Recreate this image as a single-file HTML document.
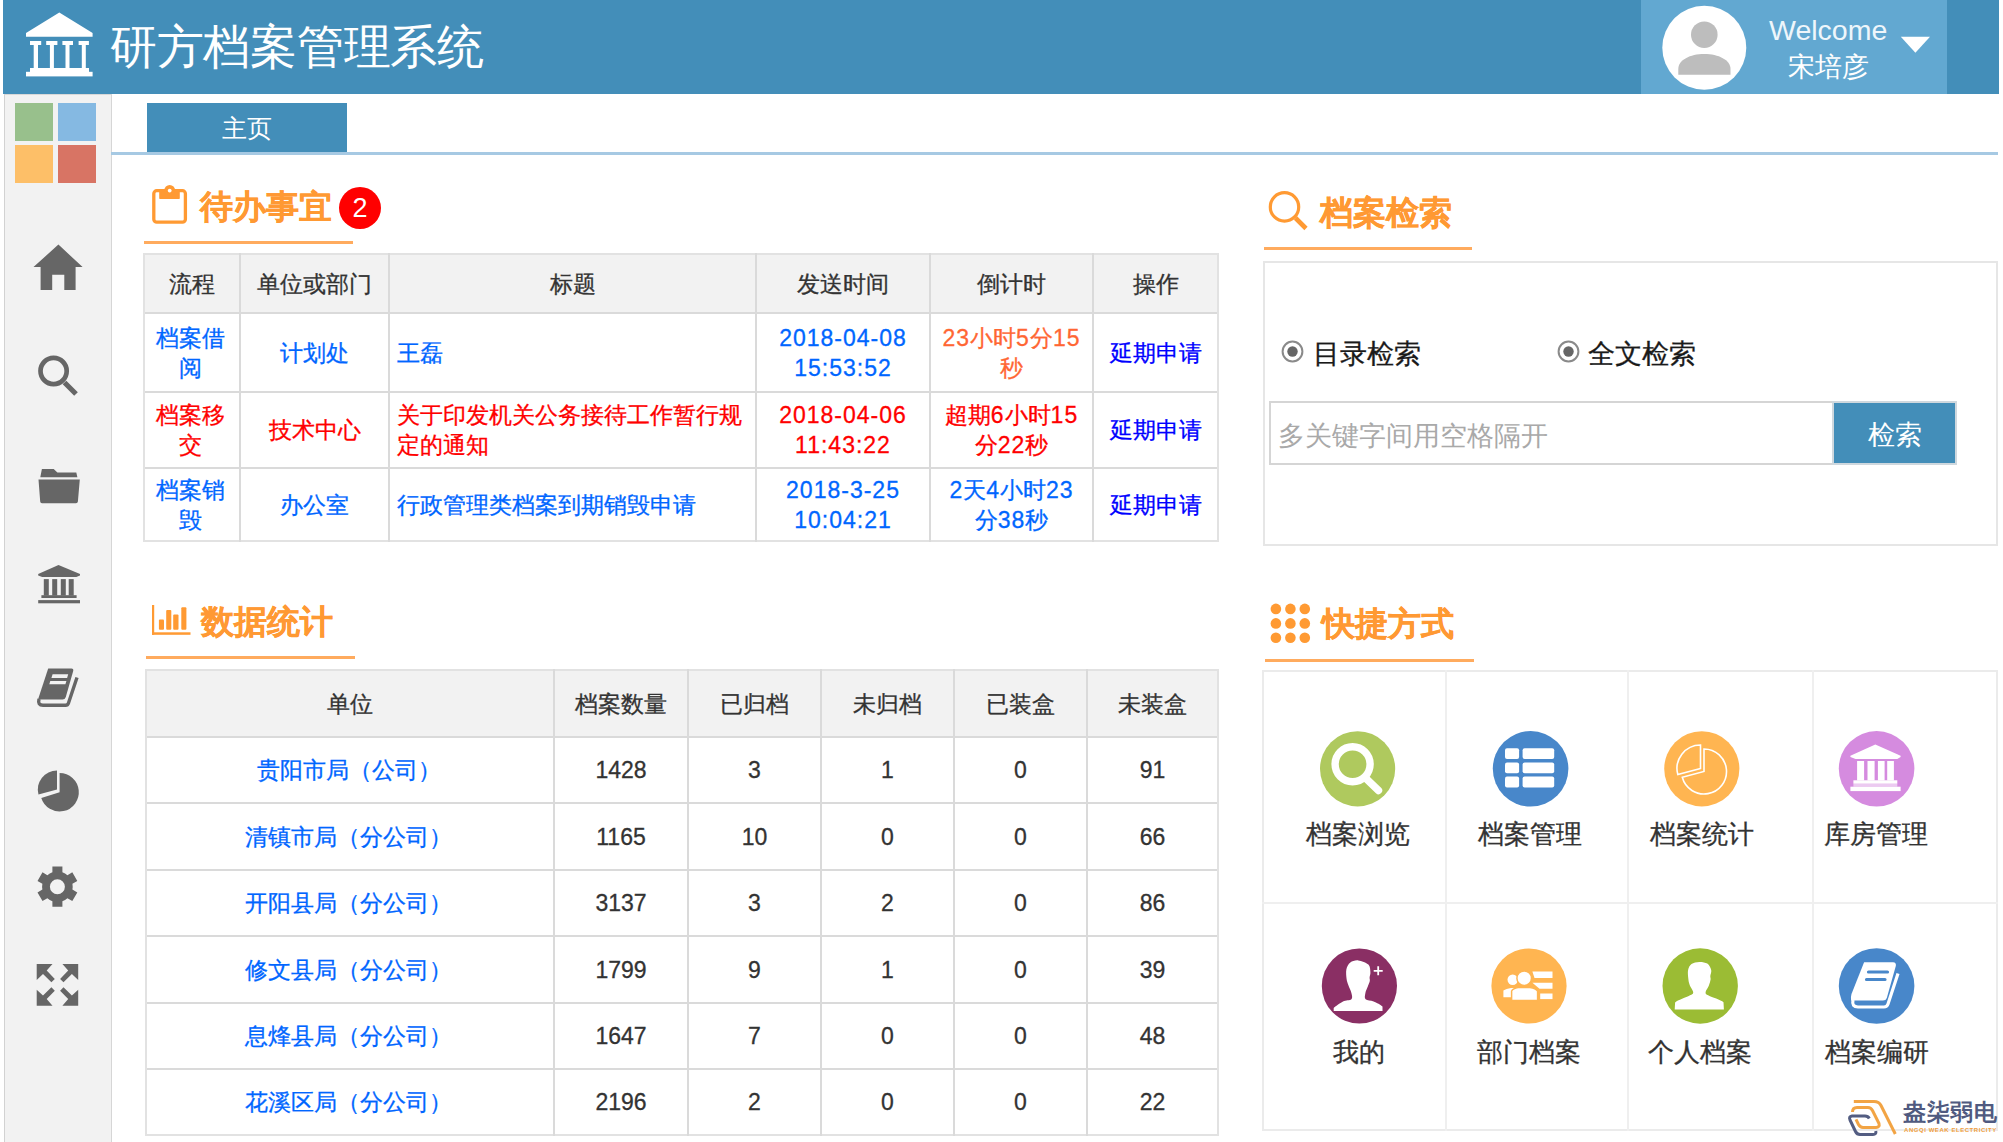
<!DOCTYPE html><html><head><meta charset="utf-8"><style>
*{margin:0;padding:0;box-sizing:border-box}
html,body{width:2003px;height:1142px;overflow:hidden;background:#fff}
body{font-family:"Liberation Sans",sans-serif;position:relative;color:#333}
.a{position:absolute;white-space:nowrap}
.c{position:absolute;display:flex;align-items:center;justify-content:center;text-align:center}
.t{font-size:23px;line-height:30px;-webkit-text-stroke:0.3px currentColor}
.bl{color:#0066ff}
.rd{color:#ff0000}
.or{color:#ff6633}
.lk{color:#0000ff}
.tt{color:#ff9933;font-weight:bold;font-size:33px;line-height:40px;-webkit-text-stroke:0.35px #ff9933}
.n{letter-spacing:1px}
.ic{font-size:26px;line-height:30px;color:#333;-webkit-text-stroke:0.3px currentColor}
</style></head><body>
<div class="a" style="left:3px;top:0;width:1995.6px;height:94px;background:#438eb9"></div>
<div class="a" style="left:1641px;top:0;width:306px;height:94px;background:#62a8d1"></div>
<div class="a" style="left:4px;top:94px;width:108px;height:1048px;background:#f2f2f2;border-left:1px solid #d2d2d2;border-right:1px solid #d6d6d6;border-top:1px solid #d8d8d8"></div>
<div class="c" style="left:147px;top:103px;width:200px;height:50px;background:#438eb9;color:#fff;font-size:25px;font-weight:300">主页</div>
<div class="a" style="left:111px;top:152px;width:1887px;height:3px;background:#a6c9e3"></div>
<div class="a" style="left:110px;top:17px;font-size:46.5px;letter-spacing:-0.3px;line-height:60px;color:#fff;font-weight:400">研方档案管理系统</div>
<div class="a" style="left:1769px;top:12px;font-size:28.5px;line-height:36px;color:#eef6fb">Welcome</div>
<div class="a" style="left:1788px;top:49.5px;font-size:27px;line-height:34px;color:#fff;font-weight:300">宋培彦</div>
<div class="a tt" style="left:200px;top:186.5px">待办事宜</div>
<div class="c" style="left:339px;top:187px;width:42px;height:42px;border-radius:50%;background:#ff0000;color:#fff;font-size:27px">2</div>
<div class="a" style="left:144px;top:241px;width:209px;height:3px;background:#ffab5e"></div>
<div class="a tt" style="left:201px;top:602px">数据统计</div>
<div class="a" style="left:146px;top:656px;width:209px;height:3px;background:#ffab5e"></div>
<div class="a tt" style="left:1319.5px;top:193px">档案检索</div>
<div class="a" style="left:1264px;top:247px;width:208px;height:3px;background:#ffab5e"></div>
<div class="a tt" style="left:1321.5px;top:604px">快捷方式</div>
<div class="a" style="left:1265px;top:659px;width:209px;height:3px;background:#ffab5e"></div>
<div class="a" style="left:144px;top:254px;width:1074px;height:59px;background:#f2f2f2"></div>
<div class="a" style="left:143px;top:253px;width:1076px;height:2px;background:#e2e2e2"></div>
<div class="a" style="left:143px;top:312px;width:1076px;height:2px;background:#dadada"></div>
<div class="a" style="left:143px;top:391px;width:1076px;height:2px;background:#dadada"></div>
<div class="a" style="left:143px;top:467px;width:1076px;height:2px;background:#dadada"></div>
<div class="a" style="left:143px;top:540px;width:1076px;height:2px;background:#e2e2e2"></div>
<div class="a" style="left:143px;top:253px;width:2px;height:289px;background:#e2e2e2"></div>
<div class="a" style="left:239px;top:253px;width:2px;height:289px;background:#dadada"></div>
<div class="a" style="left:388px;top:253px;width:2px;height:289px;background:#dadada"></div>
<div class="a" style="left:755px;top:253px;width:2px;height:289px;background:#dadada"></div>
<div class="a" style="left:929px;top:253px;width:2px;height:289px;background:#dadada"></div>
<div class="a" style="left:1092px;top:253px;width:2px;height:289px;background:#dadada"></div>
<div class="a" style="left:1217px;top:253px;width:2px;height:289px;background:#e2e2e2"></div>
<div class="c t" style="left:144px;top:254px;width:96px;height:59px;justify-content:center;padding-left:0px;"><div>流程</div></div>
<div class="c t" style="left:240px;top:254px;width:149px;height:59px;justify-content:center;padding-left:0px;"><div>单位或部门</div></div>
<div class="c t" style="left:389px;top:254px;width:367px;height:59px;justify-content:center;padding-left:0px;"><div>标题</div></div>
<div class="c t" style="left:756px;top:254px;width:174px;height:59px;justify-content:center;padding-left:0px;"><div>发送时间</div></div>
<div class="c t" style="left:930px;top:254px;width:163px;height:59px;justify-content:center;padding-left:0px;"><div>倒计时</div></div>
<div class="c t" style="left:1093px;top:254px;width:125px;height:59px;justify-content:center;padding-left:0px;"><div>操作</div></div>
<div class="c t bl" style="left:144px;top:313px;width:96px;height:79px;justify-content:center;padding-left:0px;padding-right:3px"><div>档案借<br>阅</div></div>
<div class="c t bl" style="left:240px;top:313px;width:149px;height:79px;justify-content:center;padding-left:0px;"><div>计划处</div></div>
<div class="c t bl" style="left:389px;top:313px;width:367px;height:79px;justify-content:flex-start;padding-left:8px;text-align:left"><div>王磊</div></div>
<div class="c t bl" style="left:756px;top:313px;width:174px;height:79px;justify-content:center;padding-left:0px;"><div><span class="n">2018-04-08</span><br><span class="n">15:53:52</span></div></div>
<div class="c t bl" style="left:930px;top:313px;width:163px;height:79px;justify-content:center;padding-left:0px;"><div><span class="or"><span class="n">23</span>小时<span class="n">5</span>分<span class="n">15</span><br>秒</span></div></div>
<div class="c t lk" style="left:1093px;top:313px;width:125px;height:79px;justify-content:center;padding-left:0px;"><div>延期申请</div></div>
<div class="c t rd" style="left:144px;top:392px;width:96px;height:76px;justify-content:center;padding-left:0px;padding-right:3px"><div>档案移<br>交</div></div>
<div class="c t rd" style="left:240px;top:392px;width:149px;height:76px;justify-content:center;padding-left:0px;"><div>技术中心</div></div>
<div class="c t rd" style="left:389px;top:392px;width:367px;height:76px;justify-content:flex-start;padding-left:8px;text-align:left"><div>关于印发机关公务接待工作暂行规<br>定的通知</div></div>
<div class="c t rd" style="left:756px;top:392px;width:174px;height:76px;justify-content:center;padding-left:0px;"><div><span class="n">2018-04-06</span><br><span class="n">11:43:22</span></div></div>
<div class="c t rd" style="left:930px;top:392px;width:163px;height:76px;justify-content:center;padding-left:0px;"><div>超期<span class="n">6</span>小时<span class="n">15</span><br>分<span class="n">22</span>秒</div></div>
<div class="c t lk" style="left:1093px;top:392px;width:125px;height:76px;justify-content:center;padding-left:0px;"><div>延期申请</div></div>
<div class="c t bl" style="left:144px;top:468px;width:96px;height:73px;justify-content:center;padding-left:0px;padding-right:3px"><div>档案销<br>毁</div></div>
<div class="c t bl" style="left:240px;top:468px;width:149px;height:73px;justify-content:center;padding-left:0px;"><div>办公室</div></div>
<div class="c t bl" style="left:389px;top:468px;width:367px;height:73px;justify-content:flex-start;padding-left:8px;text-align:left"><div>行政管理类档案到期销毁申请</div></div>
<div class="c t bl" style="left:756px;top:468px;width:174px;height:73px;justify-content:center;padding-left:0px;"><div><span class="n">2018-3-25</span><br><span class="n">10:04:21</span></div></div>
<div class="c t bl" style="left:930px;top:468px;width:163px;height:73px;justify-content:center;padding-left:0px;"><div><span class="n">2</span>天<span class="n">4</span>小时<span class="n">23</span><br>分<span class="n">38</span>秒</div></div>
<div class="c t lk" style="left:1093px;top:468px;width:125px;height:73px;justify-content:center;padding-left:0px;"><div>延期申请</div></div>
<div class="a" style="left:146px;top:670px;width:1072px;height:67px;background:#f2f2f2"></div>
<div class="a" style="left:145px;top:669px;width:1074px;height:2px;background:#e2e2e2"></div>
<div class="a" style="left:145px;top:736px;width:1074px;height:2px;background:#dadada"></div>
<div class="a" style="left:145px;top:802px;width:1074px;height:2px;background:#dadada"></div>
<div class="a" style="left:145px;top:869px;width:1074px;height:2px;background:#dadada"></div>
<div class="a" style="left:145px;top:935px;width:1074px;height:2px;background:#dadada"></div>
<div class="a" style="left:145px;top:1002px;width:1074px;height:2px;background:#dadada"></div>
<div class="a" style="left:145px;top:1068px;width:1074px;height:2px;background:#dadada"></div>
<div class="a" style="left:145px;top:1134px;width:1074px;height:2px;background:#e2e2e2"></div>
<div class="a" style="left:145px;top:669px;width:2px;height:467px;background:#e2e2e2"></div>
<div class="a" style="left:553px;top:669px;width:2px;height:467px;background:#dadada"></div>
<div class="a" style="left:687px;top:669px;width:2px;height:467px;background:#dadada"></div>
<div class="a" style="left:820px;top:669px;width:2px;height:467px;background:#dadada"></div>
<div class="a" style="left:953px;top:669px;width:2px;height:467px;background:#dadada"></div>
<div class="a" style="left:1086px;top:669px;width:2px;height:467px;background:#dadada"></div>
<div class="a" style="left:1217px;top:669px;width:2px;height:467px;background:#e2e2e2"></div>
<div class="c t" style="left:146px;top:670px;width:408px;height:67px;justify-content:center;padding-left:0px;"><div>单位</div></div>
<div class="c t" style="left:554px;top:670px;width:134px;height:67px;justify-content:center;padding-left:0px;"><div>档案数量</div></div>
<div class="c t" style="left:688px;top:670px;width:133px;height:67px;justify-content:center;padding-left:0px;"><div>已归档</div></div>
<div class="c t" style="left:821px;top:670px;width:133px;height:67px;justify-content:center;padding-left:0px;"><div>未归档</div></div>
<div class="c t" style="left:954px;top:670px;width:133px;height:67px;justify-content:center;padding-left:0px;"><div>已装盒</div></div>
<div class="c t" style="left:1087px;top:670px;width:131px;height:67px;justify-content:center;padding-left:0px;"><div>未装盒</div></div>
<div class="c t bl" style="left:146px;top:737px;width:408px;height:66px;justify-content:center;padding-left:0px;padding-right:3px"><div>贵阳市局（公司）</div></div>
<div class="c t" style="left:554px;top:737px;width:134px;height:66px;justify-content:center;padding-left:0px;color:#333"><div>1428</div></div>
<div class="c t" style="left:688px;top:737px;width:133px;height:66px;justify-content:center;padding-left:0px;color:#333"><div>3</div></div>
<div class="c t" style="left:821px;top:737px;width:133px;height:66px;justify-content:center;padding-left:0px;color:#333"><div>1</div></div>
<div class="c t" style="left:954px;top:737px;width:133px;height:66px;justify-content:center;padding-left:0px;color:#333"><div>0</div></div>
<div class="c t" style="left:1087px;top:737px;width:131px;height:66px;justify-content:center;padding-left:0px;color:#333"><div>91</div></div>
<div class="c t bl" style="left:146px;top:803px;width:408px;height:67px;justify-content:center;padding-left:0px;padding-right:3px"><div>清镇市局（分公司）</div></div>
<div class="c t" style="left:554px;top:803px;width:134px;height:67px;justify-content:center;padding-left:0px;color:#333"><div>1165</div></div>
<div class="c t" style="left:688px;top:803px;width:133px;height:67px;justify-content:center;padding-left:0px;color:#333"><div>10</div></div>
<div class="c t" style="left:821px;top:803px;width:133px;height:67px;justify-content:center;padding-left:0px;color:#333"><div>0</div></div>
<div class="c t" style="left:954px;top:803px;width:133px;height:67px;justify-content:center;padding-left:0px;color:#333"><div>0</div></div>
<div class="c t" style="left:1087px;top:803px;width:131px;height:67px;justify-content:center;padding-left:0px;color:#333"><div>66</div></div>
<div class="c t bl" style="left:146px;top:870px;width:408px;height:66px;justify-content:center;padding-left:0px;padding-right:3px"><div>开阳县局（分公司）</div></div>
<div class="c t" style="left:554px;top:870px;width:134px;height:66px;justify-content:center;padding-left:0px;color:#333"><div>3137</div></div>
<div class="c t" style="left:688px;top:870px;width:133px;height:66px;justify-content:center;padding-left:0px;color:#333"><div>3</div></div>
<div class="c t" style="left:821px;top:870px;width:133px;height:66px;justify-content:center;padding-left:0px;color:#333"><div>2</div></div>
<div class="c t" style="left:954px;top:870px;width:133px;height:66px;justify-content:center;padding-left:0px;color:#333"><div>0</div></div>
<div class="c t" style="left:1087px;top:870px;width:131px;height:66px;justify-content:center;padding-left:0px;color:#333"><div>86</div></div>
<div class="c t bl" style="left:146px;top:936px;width:408px;height:67px;justify-content:center;padding-left:0px;padding-right:3px"><div>修文县局（分公司）</div></div>
<div class="c t" style="left:554px;top:936px;width:134px;height:67px;justify-content:center;padding-left:0px;color:#333"><div>1799</div></div>
<div class="c t" style="left:688px;top:936px;width:133px;height:67px;justify-content:center;padding-left:0px;color:#333"><div>9</div></div>
<div class="c t" style="left:821px;top:936px;width:133px;height:67px;justify-content:center;padding-left:0px;color:#333"><div>1</div></div>
<div class="c t" style="left:954px;top:936px;width:133px;height:67px;justify-content:center;padding-left:0px;color:#333"><div>0</div></div>
<div class="c t" style="left:1087px;top:936px;width:131px;height:67px;justify-content:center;padding-left:0px;color:#333"><div>39</div></div>
<div class="c t bl" style="left:146px;top:1003px;width:408px;height:66px;justify-content:center;padding-left:0px;padding-right:3px"><div>息烽县局（分公司）</div></div>
<div class="c t" style="left:554px;top:1003px;width:134px;height:66px;justify-content:center;padding-left:0px;color:#333"><div>1647</div></div>
<div class="c t" style="left:688px;top:1003px;width:133px;height:66px;justify-content:center;padding-left:0px;color:#333"><div>7</div></div>
<div class="c t" style="left:821px;top:1003px;width:133px;height:66px;justify-content:center;padding-left:0px;color:#333"><div>0</div></div>
<div class="c t" style="left:954px;top:1003px;width:133px;height:66px;justify-content:center;padding-left:0px;color:#333"><div>0</div></div>
<div class="c t" style="left:1087px;top:1003px;width:131px;height:66px;justify-content:center;padding-left:0px;color:#333"><div>48</div></div>
<div class="c t bl" style="left:146px;top:1069px;width:408px;height:66px;justify-content:center;padding-left:0px;padding-right:3px"><div>花溪区局（分公司）</div></div>
<div class="c t" style="left:554px;top:1069px;width:134px;height:66px;justify-content:center;padding-left:0px;color:#333"><div>2196</div></div>
<div class="c t" style="left:688px;top:1069px;width:133px;height:66px;justify-content:center;padding-left:0px;color:#333"><div>2</div></div>
<div class="c t" style="left:821px;top:1069px;width:133px;height:66px;justify-content:center;padding-left:0px;color:#333"><div>0</div></div>
<div class="c t" style="left:954px;top:1069px;width:133px;height:66px;justify-content:center;padding-left:0px;color:#333"><div>0</div></div>
<div class="c t" style="left:1087px;top:1069px;width:131px;height:66px;justify-content:center;padding-left:0px;color:#333"><div>22</div></div>
<div class="a" style="left:1263px;top:261px;width:735px;height:285px;border:2px solid #e6e6e6"></div>
<div class="a ic" style="left:1313px;top:338.5px;font-size:26.5px;color:#1a1a1a">目录检索</div>
<div class="a ic" style="left:1588px;top:338.5px;font-size:26.5px;color:#1a1a1a">全文检索</div>
<div class="a" style="left:1269px;top:401px;width:564px;height:64px;border:2px solid #d5d5d5;border-right:none;background:#fff"></div>
<div class="a" style="left:1278px;top:420.5px;font-size:26.6px;line-height:30px;color:#a9a9a9">多关键字间用空格隔开</div>
<div class="c" style="left:1832px;top:401px;width:125px;height:64px;background:#438eb9;color:#fff;font-size:27px;font-weight:300;border:2px solid #cfd8de;padding-top:4px">检索</div>
<div class="a" style="left:1262px;top:670px;width:736px;height:461px;border:2px solid #ebebeb"></div>
<div class="a" style="left:1445px;top:670px;width:2px;height:461px;background:#efefef"></div>
<div class="a" style="left:1627px;top:670px;width:2px;height:461px;background:#efefef"></div>
<div class="a" style="left:1812px;top:670px;width:2px;height:461px;background:#efefef"></div>
<div class="a" style="left:1262px;top:902px;width:736px;height:2px;background:#efefef"></div>
<div class="c ic" style="left:1268px;top:819px;width:180px;height:30px">档案浏览</div>
<div class="c ic" style="left:1440px;top:819px;width:180px;height:30px">档案管理</div>
<div class="c ic" style="left:1612px;top:819px;width:180px;height:30px">档案统计</div>
<div class="c ic" style="left:1786px;top:819px;width:180px;height:30px">库房管理</div>
<div class="c ic" style="left:1269px;top:1037px;width:180px;height:30px">我的</div>
<div class="c ic" style="left:1439px;top:1037px;width:180px;height:30px">部门档案</div>
<div class="c ic" style="left:1610px;top:1037px;width:180px;height:30px">个人档案</div>
<div class="c ic" style="left:1787px;top:1037px;width:180px;height:30px">档案编研</div>
<div class="a" style="left:1903px;top:1099px;font-size:22.5px;line-height:28px;color:#505a80;font-weight:bold;letter-spacing:0.6px">盎柒弱电</div>
<div class="a" style="left:1904px;top:1126px;font-size:6px;line-height:8px;color:#f0a040;font-weight:bold;letter-spacing:0.55px">ANGQI WEAK ELECTRICITY</div>
<svg class="a" style="left:0;top:0" width="2003" height="1142" viewBox="0 0 2003 1142"><g fill="#fff"><path d="M59.3 12.5 L92.6 33 L92.6 36.8 L26 36.8 L26 33 Z"/><rect x="30" y="41" width="11.2" height="4"/><rect x="46.2" y="41" width="11.2" height="4"/><rect x="62.4" y="41" width="10.6" height="4"/><rect x="78.6" y="41" width="10.3" height="4"/><rect x="33.7" y="44" width="4.3" height="25"/><rect x="49.9" y="44" width="4" height="25"/><rect x="65.5" y="44" width="4" height="25"/><rect x="81.8" y="44" width="4" height="25"/><rect x="30" y="68" width="59" height="4"/><rect x="26" y="71.8" width="66.6" height="4.6"/></g><circle cx="1704.3" cy="47.8" r="42" fill="#fff"/><circle cx="1704.3" cy="34.7" r="13.3" fill="#bdbdbd"/><path fill="#bdbdbd" d="M1678.3 74.8 L1678.3 69 C1678.3 60 1690 54 1704.3 54 C1718.6 54 1730.5 60 1730.5 69 L1730.5 74.8 Z"/><path d="M1900.8 36.8 L1930 36.8 L1915.4 52.7 Z" fill="#fff"/><rect x="15" y="103" width="38" height="38" fill="#98c08c"/><rect x="58" y="103" width="38" height="38" fill="#85b9e2"/><rect x="15" y="145" width="38" height="38" fill="#fdbf68"/><rect x="58" y="145" width="38" height="38" fill="#d87464"/><path fill="#666" d="M58.4 244.6 L82.6 267 L75.6 267 L75.6 290 L64.3 290 L64.3 274.8 L52.2 274.8 L52.2 290 L40.6 290 L40.6 267 L33.5 267 Z"/><circle cx="53.6" cy="371" r="13.1" fill="none" stroke="#666" stroke-width="4.7"/><path d="M64.5 382.5 L76 394" stroke="#666" stroke-width="5.2"/><path fill="#666" d="M41.9 468.9 L53.7 468.9 L57.4 472.6 L76.3 472.6 L77.4 477.3 L40.3 477.3 Z"/><path fill="#666" d="M38.5 479.6 L79.8 479.6 L77.9 501.5 Q77.7 503.3 76 503.3 L42 503.3 Q40.3 503.3 40.2 501.5 Z"/><g fill="#666"><path d="M58.5 564.9 L80 574.1 L80 575.4 L76.3 577 L42.2 577 L38.2 575.4 L38.2 574.1 Z"/><rect x="43.8" y="579.1" width="5" height="16.5"/><rect x="52.2" y="579.1" width="5" height="16.5"/><rect x="60.8" y="579.1" width="5" height="16.5"/><rect x="68.7" y="579.1" width="5" height="16.5"/><rect x="41.4" y="595.2" width="35.2" height="2.8"/><rect x="38.2" y="600.1" width="41.8" height="3.2"/></g><path fill="#666" d="M48.2 668.5 L71.5 668.5 Q73.8 668.8 73.2 671 L65.8 697 Q65 699.5 62.5 699.5 L38 699.5 Z"/><path fill="#f2f2f2" d="M52.6 674.3 L68.2 674.3 L67.1 678 L51.4 678 Z M50.3 681.1 L66.4 681.1 L65.4 684.3 L49.3 684.3 Z"/><path d="M39 699 Q37.5 705.3 43 705.3 L65.5 705.3 Q67.8 705.3 68.5 703 L77 677.5" fill="none" stroke="#666" stroke-width="3.4"/><path fill="#666" d="M59.60 792.30 L59.60 773.10 A19.20 19.20 0 1 1 41.27 798.01 Z"/><path fill="#666" d="M57.00 789.60 L38.45 794.57 A19.20 19.20 0 0 1 57.00 770.40 Z"/><path fill="#666" fill-rule="evenodd" d="M52.40 872.24 L52.40 866.61 L62.40 866.61 L62.40 872.24 A15.30 15.30 0 0 1 67.42 875.14 L72.30 872.33 L77.30 880.99 L72.42 883.80 A15.30 15.30 0 0 1 72.42 889.60 L77.30 892.41 L72.30 901.07 L67.42 898.26 A15.30 15.30 0 0 1 62.40 901.16 L62.40 906.79 L52.40 906.79 L52.40 901.16 A15.30 15.30 0 0 1 47.38 898.26 L42.50 901.07 L37.50 892.41 L42.38 889.60 A15.30 15.30 0 0 1 42.38 883.80 L37.50 880.99 L42.50 872.33 L47.38 875.14 A15.30 15.30 0 0 1 52.40 872.24 Z M64.9 886.7 A7.5 7.5 0 1 0 49.9 886.7 A7.5 7.5 0 1 0 64.9 886.7 Z"/><g fill="#666"><path d="M36.70 963.90 L52.50 963.90 L46.70 970.50 L54.80 978.90 L51.40 982.30 L43.00 974.10 L36.70 979.90 Z"/><path d="M78.20 963.90 L62.40 963.90 L68.20 970.50 L60.10 978.90 L63.50 982.30 L71.90 974.10 L78.20 979.90 Z"/><path d="M36.70 1005.70 L52.50 1005.70 L46.70 999.10 L54.80 990.70 L51.40 987.30 L43.00 995.50 L36.70 989.70 Z"/><path d="M78.20 1005.70 L62.40 1005.70 L68.20 999.10 L60.10 990.70 L63.50 987.30 L71.90 995.50 L78.20 989.70 Z"/></g><rect x="153.8" y="190.7" width="31.6" height="31.5" rx="3" fill="none" stroke="#ff9a33" stroke-width="3.3"/><rect x="159.2" y="189" width="20.6" height="10" rx="0.8" fill="#ff9a33"/><circle cx="169.7" cy="190.3" r="5.4" fill="#ff9a33"/><circle cx="169.7" cy="190.6" r="1.9" fill="#fff"/><g fill="#ff9a33"><rect x="152" y="605" width="2.2" height="29.8"/><rect x="152" y="632.3" width="38.5" height="2.5"/><rect x="158.9" y="619.5" width="5.1" height="10.3" rx="1"/><rect x="166.2" y="609.9" width="5.1" height="19.9" rx="1"/><rect x="173.2" y="614.5" width="5.3" height="15.3" rx="1"/><rect x="181.3" y="607.3" width="5.1" height="22.5" rx="1"/></g><circle cx="1284.5" cy="206.9" r="14.2" fill="none" stroke="#ff9a33" stroke-width="3.2"/><path d="M1295.5 218 L1306 228.5" stroke="#ff9a33" stroke-width="4.6"/><circle cx="1275.9" cy="608.9" r="5.3" fill="#ff9a33"/><circle cx="1290.4" cy="608.9" r="5.3" fill="#ff9a33"/><circle cx="1304.8" cy="608.9" r="5.3" fill="#ff9a33"/><circle cx="1275.9" cy="623.4" r="5.3" fill="#ff9a33"/><circle cx="1290.4" cy="623.4" r="5.3" fill="#ff9a33"/><circle cx="1304.8" cy="623.4" r="5.3" fill="#ff9a33"/><circle cx="1275.9" cy="637.8" r="5.3" fill="#ff9a33"/><circle cx="1290.4" cy="637.8" r="5.3" fill="#ff9a33"/><circle cx="1304.8" cy="637.8" r="5.3" fill="#ff9a33"/><circle cx="1292.5" cy="351.5" r="9.9" fill="#fff" stroke="#8a8a8a" stroke-width="2"/><circle cx="1292.5" cy="351.5" r="5.2" fill="#666"/><circle cx="1568.5" cy="351.5" r="9.9" fill="#fff" stroke="#8a8a8a" stroke-width="2"/><circle cx="1568.5" cy="351.5" r="5.2" fill="#666"/><circle cx="1357.6" cy="768.8" r="37.6" fill="#afc95e"/><circle cx="1352.6" cy="764.3" r="17.5" fill="none" stroke="#fff" stroke-width="7.4"/><path d="M1366 778.5 L1378.5 790.5" stroke="#fff" stroke-width="7.4" stroke-linecap="round"/><circle cx="1530.6" cy="768.8" r="37.8" fill="#4887ca"/><rect x="1505" y="748.3" width="14.1" height="10.8" rx="2" fill="#fff"/><rect x="1522.6" y="748.3" width="31.6" height="10.8" rx="2" fill="#fff"/><rect x="1505" y="762.5" width="14.1" height="10.8" rx="2" fill="#fff"/><rect x="1522.6" y="762.5" width="31.6" height="10.8" rx="2" fill="#fff"/><rect x="1505" y="776.6" width="14.1" height="11.0" rx="2" fill="#fff"/><rect x="1522.6" y="776.6" width="31.6" height="11.0" rx="2" fill="#fff"/><circle cx="1701.8" cy="768.8" r="37.6" fill="#ffb551"/><path fill="none" stroke="#fff" stroke-width="1.6" d="M1704.00 771.50 L1704.00 749.00 A22.50 22.50 0 1 1 1682.27 777.32 Z"/><path fill="none" stroke="#fff" stroke-width="1.6" d="M1700.50 768.50 L1677.80 774.58 A23.50 23.50 0 0 1 1700.50 745.00 Z"/><circle cx="1876.6" cy="768.8" r="37.8" fill="#d58bdf"/><g fill="#fff"><path d="M1875.3 744.6 L1900.6 755.8 L1900.6 757 L1897.3 759.1 L1855.6 759.1 L1850.4 757 L1850.4 755.8 Z"/><rect x="1857.1" y="761" width="7" height="19.5"/><rect x="1867.5" y="761" width="7.1" height="19.5"/><rect x="1877.9" y="761" width="6.7" height="19.5"/><rect x="1887.2" y="761" width="6.7" height="19.5"/><rect x="1853.4" y="780.3" width="43.9" height="3.4"/><rect x="1853.4" y="783.7" width="43.9" height="3" fill-opacity="0.55"/><rect x="1850.4" y="786.7" width="50.2" height="4.4"/></g><circle cx="1359.4" cy="986" r="37.6" fill="#8a2f64"/><path fill="#fff" d="M1358.30 960.40 C1361.32 960.73 1366.38 962.62 1368.40 964.60 C1370.42 966.58 1370.20 970.15 1370.40 972.30 C1370.60 974.45 1369.70 976.05 1369.60 977.50 C1369.50 978.95 1370.10 979.50 1369.80 981.00 C1369.50 982.50 1368.53 984.50 1367.80 986.50 C1367.07 988.50 1365.77 990.87 1365.40 993.00 C1365.03 995.13 1364.23 997.88 1365.60 999.30 C1366.97 1000.72 1370.78 1000.30 1373.60 1001.50 C1376.42 1002.70 1381.02 1004.92 1382.50 1006.50 L1382.50 1011.00 L1333.70 1011.00 L1333.70 1008.00 C1335.25 1006.42 1340.05 1002.95 1343.00 1001.50 C1345.95 1000.05 1350.00 1000.72 1351.40 999.30 C1352.80 997.88 1351.92 995.38 1351.40 993.00 C1350.88 990.62 1349.10 987.33 1348.30 985.00 C1347.50 982.67 1346.92 981.62 1346.60 979.00 C1346.28 976.38 1345.78 972.03 1346.40 969.30 C1347.02 966.57 1348.32 964.08 1350.30 962.60 C1352.28 961.12 1355.28 960.07 1358.30 960.40 Z"/><path d="M1378.2 966.3 L1378.2 975.3 M1373.7 970.8 L1382.7 970.8" stroke="#fff" stroke-width="1.8"/><circle cx="1529" cy="986" r="37.6" fill="#ffb551"/><g fill="#fff"><circle cx="1512.7" cy="979.7" r="5.2"/><path d="M1503.4 990.5 Q1506 988.7 1511 988 L1516 988 L1516 997.2 L1503.4 997.2 Z"/><circle cx="1524.2" cy="978.2" r="7.3" stroke="#ffb551" stroke-width="1.5"/><path d="M1511.6 1000.6 L1511.6 991 Q1513 988.5 1518 987.5 L1530 987.5 Q1536 988.5 1537.6 991 L1537.6 1000.6 Z" stroke="#ffb551" stroke-width="1.5"/><path d="M1532.4 971.5 L1552.5 971.5 L1552.5 977.9 L1534.5 977.9 Z"/><path d="M1532.4 982.7 L1552.5 982.7 L1552.5 988.7 L1539.5 988.7 Z"/><rect x="1540.2" y="993.5" width="12.3" height="5.6"/></g><circle cx="1700.2" cy="986" r="37.7" fill="#9bbc34"/><path fill="#fff" d="M1699.30 961.90 C1701.93 961.82 1705.32 962.25 1707.30 963.60 C1709.28 964.95 1710.70 967.93 1711.20 970.00 C1711.70 972.07 1710.40 974.42 1710.30 976.00 C1710.20 977.58 1710.85 977.88 1710.60 979.50 C1710.35 981.12 1709.63 983.58 1708.80 985.70 C1707.97 987.82 1705.63 990.55 1705.60 992.20 C1705.57 993.85 1705.62 993.92 1708.60 995.60 C1711.58 997.28 1720.95 999.98 1723.50 1002.30 L1723.90 1009.50 L1674.70 1009.50 L1675.10 1002.50 C1677.58 1000.18 1686.58 997.32 1689.60 995.60 C1692.62 993.88 1693.20 994.02 1693.20 992.20 C1693.20 990.38 1690.42 986.98 1689.60 984.70 C1688.78 982.42 1688.55 980.95 1688.30 978.50 C1688.05 976.05 1687.57 972.40 1688.10 970.00 C1688.63 967.60 1689.63 965.45 1691.50 964.10 C1693.37 962.75 1696.67 961.98 1699.30 961.90 Z"/><circle cx="1876.6" cy="986" r="37.8" fill="#4887ca"/><path fill="#fff" d="M1864.1 962.2 L1893 962.2 Q1896.5 962.5 1895.8 966 L1886.8 998 Q1886 1000.6 1883 1000.6 L1851.1 1000.6 Q1850.5 997 1851.5 994 Z"/><path d="M1868.5 972 L1887.5 972 M1866.5 979.5 L1885 979.5" stroke="#4887ca" stroke-width="3.2" stroke-linecap="round"/><path d="M1853 1000 Q1851.5 1007 1858 1007 L1884 1007 Q1887 1007 1888 1004 L1898 973.5" fill="none" stroke="#fff" stroke-width="3.2"/><g fill="none" stroke-width="3" stroke-linecap="butt" stroke-linejoin="round"><path d="M1853.8 1101.4 L1874 1101.4 Q1879 1101.4 1881 1105.5 L1895.3 1134" stroke="#f2a444"/><path d="M1852.5 1112 Q1852.5 1107.5 1857 1107.5 L1868 1107.5 Q1871 1107.5 1872.5 1110.5 L1879 1123.5 Q1880 1127.4 1876 1127.4 L1863 1127.4 Q1860 1127.4 1858.5 1124.5 L1856 1119.3" stroke="#f2a444"/><path d="M1869.3 1118.5 Q1868 1116 1865 1116 L1852 1116 Q1848.5 1116.5 1850 1120 L1855.5 1131.5 Q1857 1134.5 1860 1134.5 L1873 1134.5 Q1876.5 1134.5 1875.8 1131" stroke="#535d82"/></g></svg>
</body></html>
